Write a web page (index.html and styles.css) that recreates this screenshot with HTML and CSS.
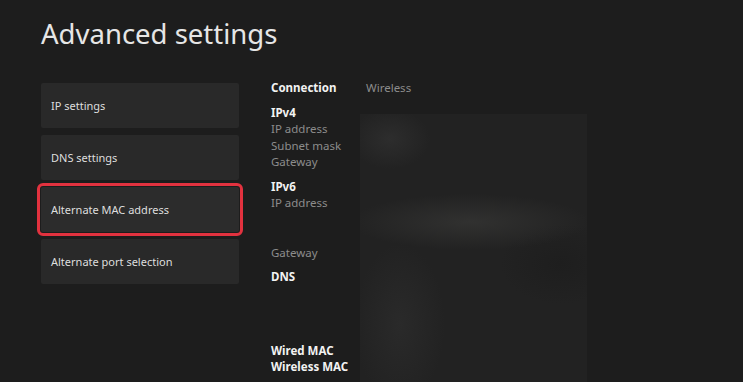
FILE: index.html
```html
<!DOCTYPE html>
<html lang="en">

<head>
    <meta charset="UTF-8">
    <title>Advanced settings</title>
    <link rel="stylesheet" href="styles.css">
</head>

<body>
    <h1 class="page-title">Advanced settings</h1>

    <div class="main">
        <div class="menu">
            <div class="menu-item">IP settings</div>
            <div class="menu-item">DNS settings</div>
            <div class="menu-item focused">Alternate MAC address</div>
            <div class="menu-item">Alternate port selection</div>
        </div>

        <div class="info">
            <div class="labels">
                <div class="strong">Connection</div>

                <div class="group">
                    <div class="strong">IPv4</div>
                    <div>IP address</div>
                    <div>Subnet mask</div>
                    <div>Gateway</div>
                </div>

                <div class="group">
                    <div class="strong">IPv6</div>
                    <div>IP address</div>
                </div>

                <div class="group gap-lg">Gateway</div>
                <div class="group strong">DNS</div>

                <div class="group gap-xl">
                    <div class="strong">Wired MAC</div>
                    <div class="strong">Wireless MAC</div>
                </div>
            </div>

            <div class="values">
                <div class="value">Wireless</div>
                <!-- values are blurred out in the screenshot -->
                <div class="blurred"></div>
            </div>
        </div>
    </div>
</body>

</html>
```

FILE: styles.css
```css
body {
    margin: 0;
    height: 382px;
    overflow: hidden;
    background-color: #1d1d1d;
    font-family: 'Noto Sans', 'Open Sans', sans-serif;
    color: #e4e4e4;
}

.page-title {
    margin: 0;
    padding: 14px 0 0 41px;
    font-size: 27.5px;
    font-weight: 400;
    line-height: 40px;
    color: #e6e6e6;
}

.main {
    display: flex;
    gap: 32px;
    padding: 26px 0 0 41px;
}

.menu {
    width: 198px;
    margin-top: 3px;
    display: flex;
    flex-direction: column;
    gap: 7px;
}

.menu-item {
    height: 45px;
    line-height: 45px;
    padding-left: 10px;
    background-color: #292929;
    border-radius: 2px;
    font-size: 11px;
    color: #dedede;
}

.menu-item.focused {
    background-color: #2c2c2c;
    outline: 3px solid #e2323f;
    outline-offset: 1px;
    border-radius: 2px;
}

.info {
    display: flex;
    font-size: 11.5px;
    line-height: 16.5px;
}

.labels {
    width: 89px;
    color: #8c8c8c;
}

.strong {
    font-weight: 700;
    color: #f2f2f2;
}

.group {
    margin-top: 8px;
}

.gap-lg {
    margin-top: 33px;
}

.gap-xl {
    margin-top: 57px;
}

.values {
    display: flex;
    flex-direction: column;
}

.value {
    padding-left: 6px;
    color: #8c8c8c;
}

.blurred {
    width: 227px;
    height: 280px;
    margin-top: 17px;
    background:
        radial-gradient(ellipse 40px 30px at 30px 25px, #2d2d2d, transparent),
        radial-gradient(ellipse 120px 28px at 110px 108px, #313130, transparent),
        radial-gradient(ellipse 45px 80px at 40px 210px, #2a2a2a, transparent),
        radial-gradient(ellipse 60px 40px at 200px 150px, #1e1e1e, transparent),
        #222222;
}
```
